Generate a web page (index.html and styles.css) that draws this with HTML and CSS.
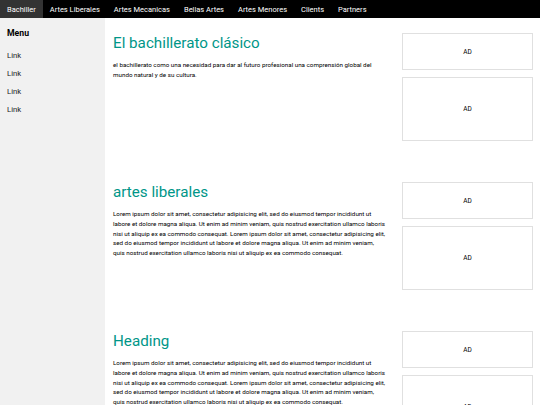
FILE: index.html
```html
<!DOCTYPE html>
<html lang="es">
<head>
<meta charset="utf-8">
<title>Bachiller</title>
<link rel="stylesheet" href="styles.css">
</head>
<body>
<nav class="topnav">
  <a class="nav-item active" href="#">Bachiller</a>
  <a class="nav-item" href="#">Artes Liberales</a>
  <a class="nav-item" href="#">Artes Mecanicas</a>
  <a class="nav-item" href="#">Bellas Artes</a>
  <a class="nav-item" href="#">Artes Menores</a>
  <a class="nav-item" href="#">Clients</a>
  <a class="nav-item" href="#">Partners</a>
</nav>
<div class="layout">
  <aside class="sidebar">
    <h4 class="side-title">Menu</h4>
    <a class="side-link" href="#">Link</a>
    <a class="side-link" href="#">Link</a>
    <a class="side-link" href="#">Link</a>
    <a class="side-link" href="#">Link</a>
  </aside>
  <main class="main">
    <section class="row">
      <div class="content">
        <h1 class="heading">El bachillerato clásico</h1>
        <p class="text">el bachillerato como una necesidad para dar al futuro profesional una comprensión global del mundo natural y de su cultura.</p>
      </div>
      <div class="ads">
        <div class="ad ad-small">AD</div>
        <div class="ad ad-large">AD</div>
      </div>
    </section>
    <section class="row">
      <div class="content">
        <h1 class="heading">artes liberales</h1>
        <p class="text">Lorem ipsum dolor sit amet, consectetur adipisicing elit, sed do eiusmod tempor incididunt ut labore et dolore magna aliqua. Ut enim ad minim veniam, quis nostrud exercitation ullamco laboris nisi ut aliquip ex ea commodo consequat. Lorem ipsum dolor sit amet, consectetur adipisicing elit, sed do eiusmod tempor incididunt ut labore et dolore magna aliqua. Ut enim ad minim veniam, quis nostrud exercitation ullamco laboris nisi ut aliquip ex ea commodo consequat.</p>
      </div>
      <div class="ads">
        <div class="ad ad-small">AD</div>
        <div class="ad ad-large">AD</div>
      </div>
    </section>
    <section class="row">
      <div class="content">
        <h1 class="heading">Heading</h1>
        <p class="text">Lorem ipsum dolor sit amet, consectetur adipisicing elit, sed do eiusmod tempor incididunt ut labore et dolore magna aliqua. Ut enim ad minim veniam, quis nostrud exercitation ullamco laboris nisi ut aliquip ex ea commodo consequat. Lorem ipsum dolor sit amet, consectetur adipisicing elit, sed do eiusmod tempor incididunt ut labore et dolore magna aliqua. Ut enim ad minim veniam, quis nostrud exercitation ullamco laboris nisi ut aliquip ex ea commodo consequat.</p>
      </div>
      <div class="ads">
        <div class="ad ad-small">AD</div>
        <div class="ad ad-large">AD</div>
      </div>
    </section>
  </main>
</div>
</body>
</html>
```

FILE: styles.css
```css
html, body {
  margin: 0;
  padding: 0;
}
body {
  font-family: Roboto, "Liberation Sans", sans-serif;
  color: #000;
  background: #fff;
  height: 405px;
  overflow: hidden;
}
.topnav {
  display: flex;
  height: 18px;
  background: #000;
}
.nav-item {
  display: flex;
  align-items: center;
  padding: 0 7px;
  color: #fff;
  text-decoration: none;
  font-size: 7.5px;
  font-weight: normal;
}
.nav-item.active {
  background: #333;
}
.layout {
  display: flex;
  height: 387px;
}
.sidebar {
  width: 105px;
  flex: none;
  background: #f1f1f1;
  display: flex;
  flex-direction: column;
}
.side-title {
  margin: 0;
  padding: 10px 7px 8px;
  font-size: 8.7px;
  font-weight: bold;
  line-height: 11px;
}
.side-link {
  display: block;
  padding: 0 7px;
  height: 18px;
  line-height: 18px;
  font-size: 7.7px;
  font-weight: normal;
  color: #222;
  text-decoration: none;
}
.main {
  flex: 1;
  display: flex;
  flex-direction: column;
}
.row {
  display: grid;
  grid-template-columns: 290px 1fr;
  padding: 15px 0 26px;
}
.content {
  padding: 0 8px;
}
.heading {
  margin: 0;
  font-size: 15.2px;
  font-weight: normal;
  line-height: 20px;
  color: #009688;
}
.text {
  margin: 8px 0 0;
  font-size: 6.25px;
  line-height: 9.8px;
  color: #000;
}
.ads {
  padding: 0 7px;
  display: flex;
  flex-direction: column;
  gap: 7px;
}
.ad {
  border: 1px solid #e0e0e0;
  display: flex;
  align-items: center;
  justify-content: center;
  font-size: 6.5px;
}
.ad-small {
  height: 35px;
}
.ad-large {
  height: 62px;
}
```
